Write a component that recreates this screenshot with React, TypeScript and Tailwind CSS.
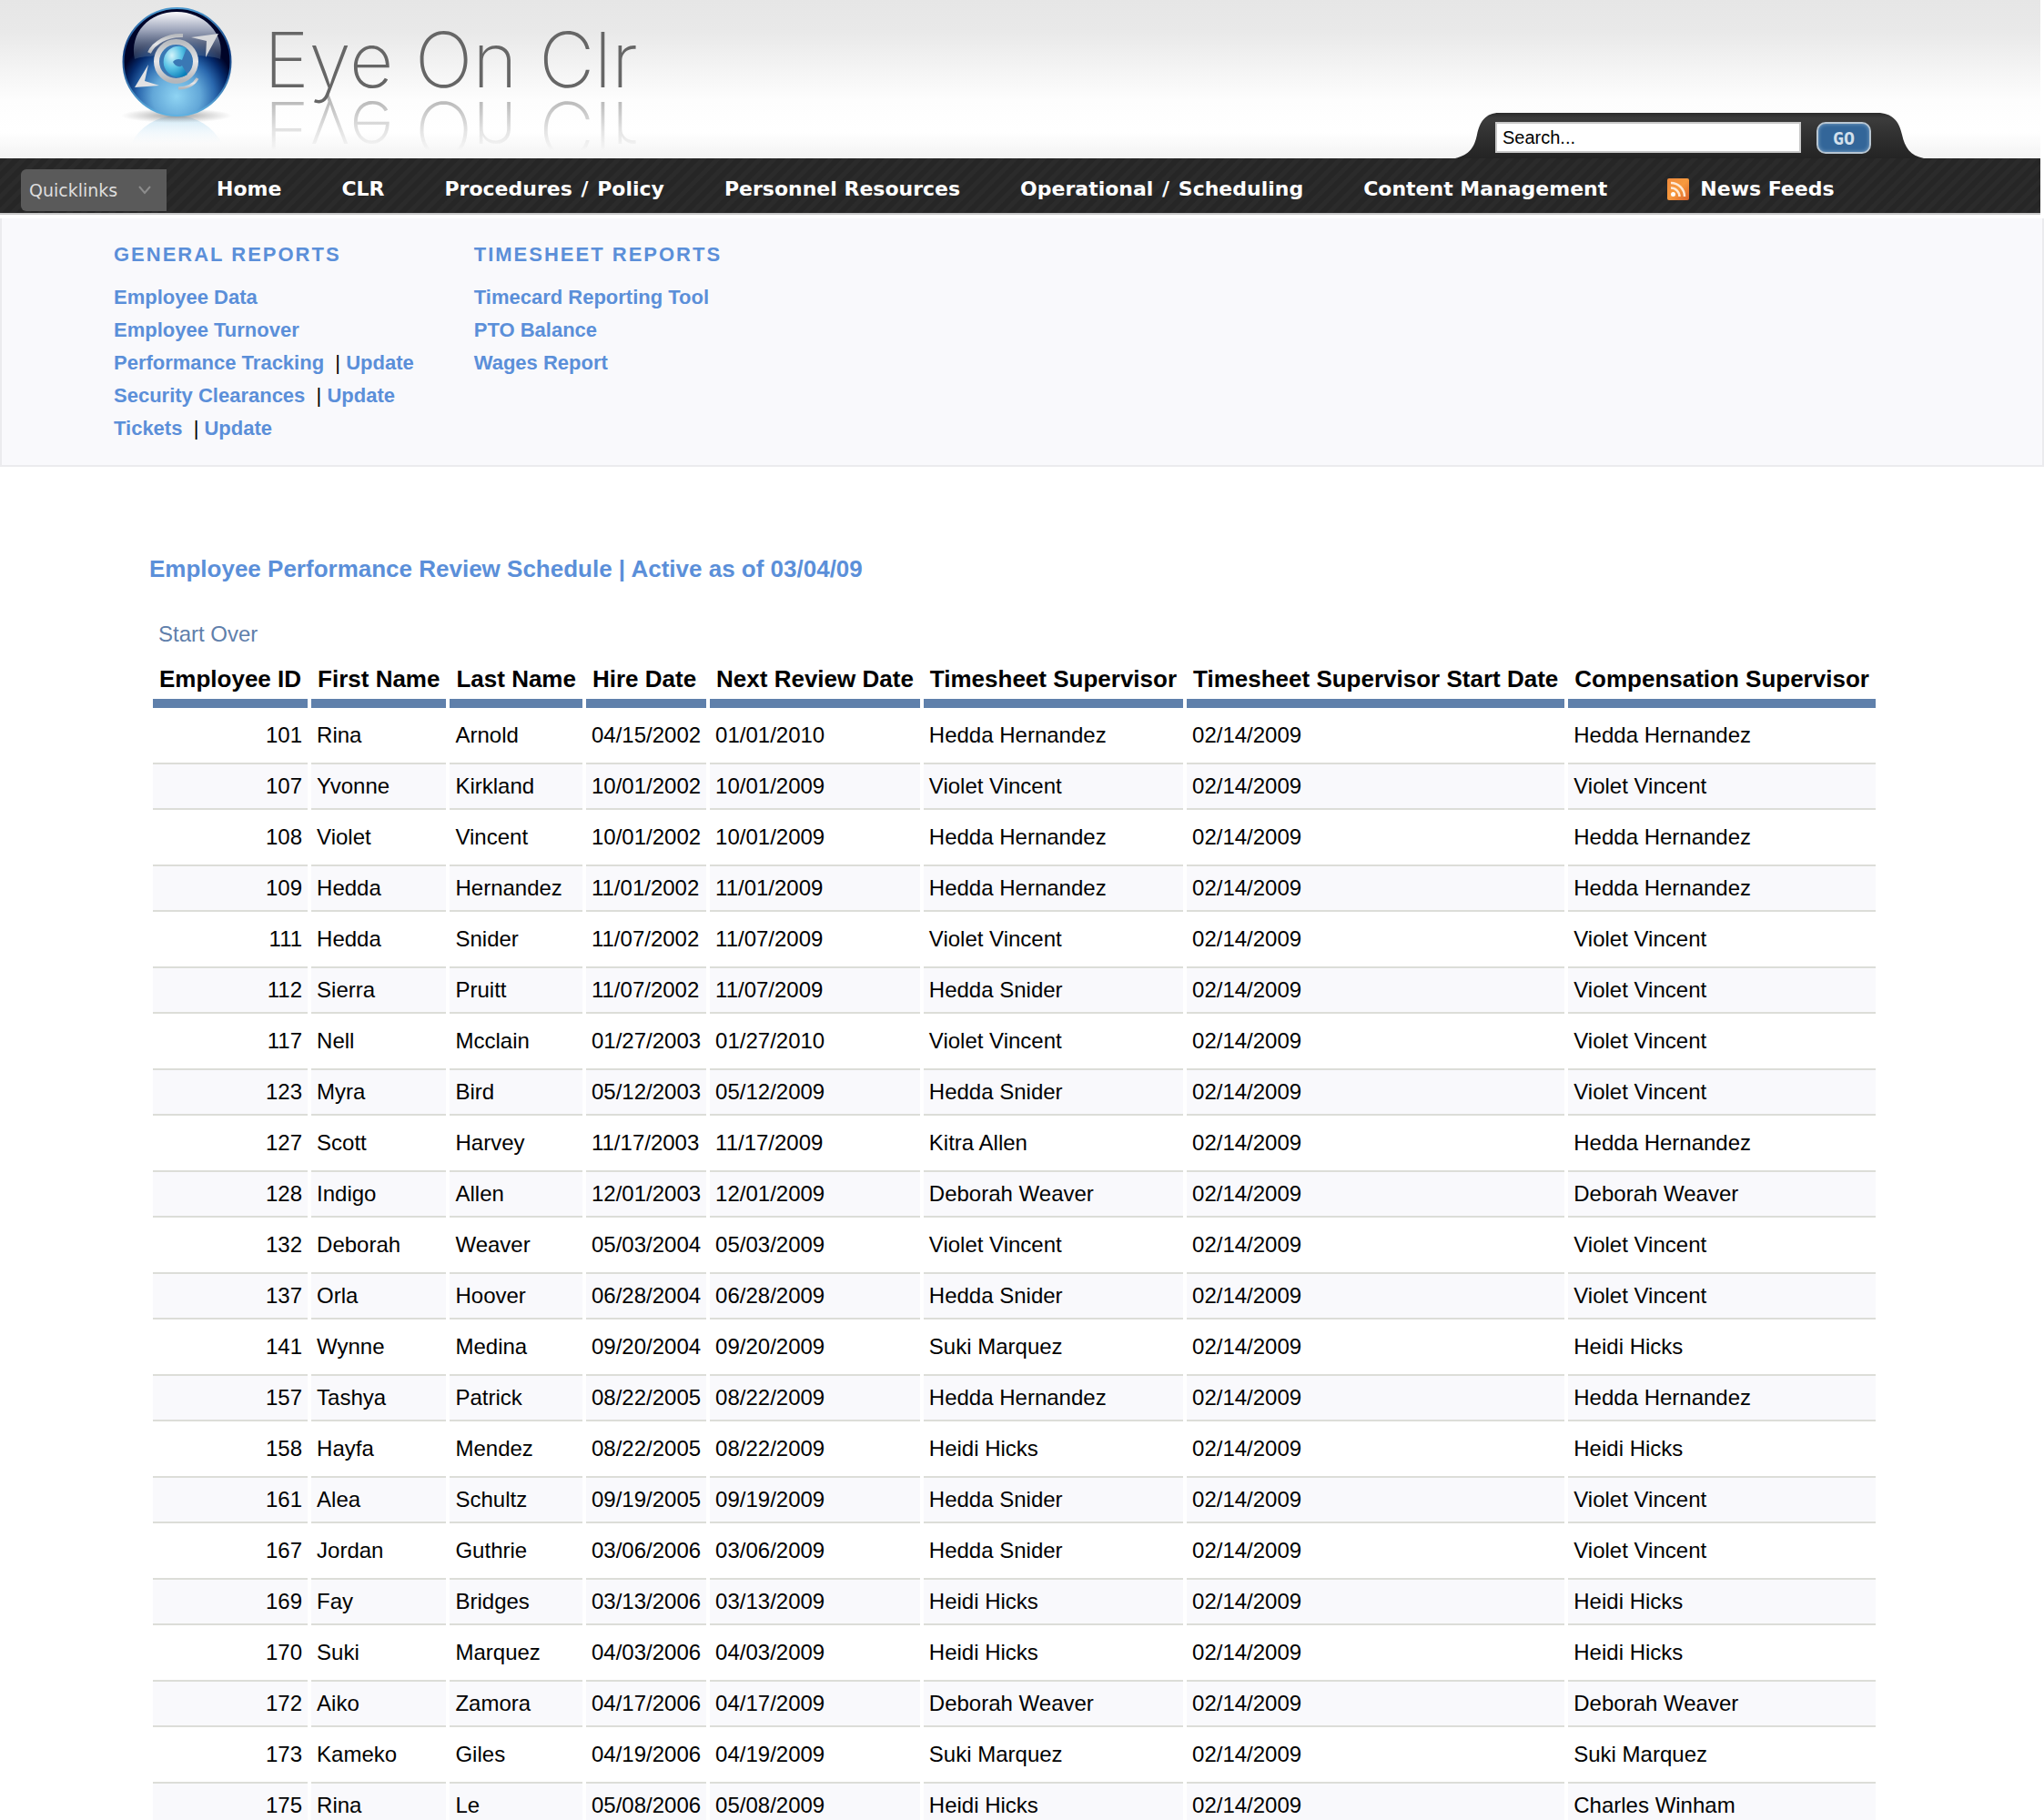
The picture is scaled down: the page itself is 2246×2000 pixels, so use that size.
import React from "react";

const NAV: string[][] = [
  ["Home"],
  ["CLR"],
  ["Procedures", "Policy"],
  ["Personnel Resources"],
  ["Operational", "Scheduling"],
  ["Content Management"],
];

const GENERAL: { label: string; update?: boolean }[] = [
  { label: "Employee Data" },
  { label: "Employee Turnover" },
  { label: "Performance Tracking", update: true },
  { label: "Security Clearances", update: true },
  { label: "Tickets", update: true },
];

const TIMESHEET = ["Timecard Reporting Tool", "PTO Balance", "Wages Report"];

const COLUMNS = [
  "Employee ID",
  "First Name",
  "Last Name",
  "Hire Date",
  "Next Review Date",
  "Timesheet Supervisor",
  "Timesheet Supervisor Start Date",
  "Compensation Supervisor",
];

const START = "02/14/2009";

const ROWS: string[][] = [
  ["101", "Rina", "Arnold", "04/15/2002", "01/01/2010", "Hedda Hernandez", START, "Hedda Hernandez"],
  ["107", "Yvonne", "Kirkland", "10/01/2002", "10/01/2009", "Violet Vincent", START, "Violet Vincent"],
  ["108", "Violet", "Vincent", "10/01/2002", "10/01/2009", "Hedda Hernandez", START, "Hedda Hernandez"],
  ["109", "Hedda", "Hernandez", "11/01/2002", "11/01/2009", "Hedda Hernandez", START, "Hedda Hernandez"],
  ["111", "Hedda", "Snider", "11/07/2002", "11/07/2009", "Violet Vincent", START, "Violet Vincent"],
  ["112", "Sierra", "Pruitt", "11/07/2002", "11/07/2009", "Hedda Snider", START, "Violet Vincent"],
  ["117", "Nell", "Mcclain", "01/27/2003", "01/27/2010", "Violet Vincent", START, "Violet Vincent"],
  ["123", "Myra", "Bird", "05/12/2003", "05/12/2009", "Hedda Snider", START, "Violet Vincent"],
  ["127", "Scott", "Harvey", "11/17/2003", "11/17/2009", "Kitra Allen", START, "Hedda Hernandez"],
  ["128", "Indigo", "Allen", "12/01/2003", "12/01/2009", "Deborah Weaver", START, "Deborah Weaver"],
  ["132", "Deborah", "Weaver", "05/03/2004", "05/03/2009", "Violet Vincent", START, "Violet Vincent"],
  ["137", "Orla", "Hoover", "06/28/2004", "06/28/2009", "Hedda Snider", START, "Violet Vincent"],
  ["141", "Wynne", "Medina", "09/20/2004", "09/20/2009", "Suki Marquez", START, "Heidi Hicks"],
  ["157", "Tashya", "Patrick", "08/22/2005", "08/22/2009", "Hedda Hernandez", START, "Hedda Hernandez"],
  ["158", "Hayfa", "Mendez", "08/22/2005", "08/22/2009", "Heidi Hicks", START, "Heidi Hicks"],
  ["161", "Alea", "Schultz", "09/19/2005", "09/19/2009", "Hedda Snider", START, "Violet Vincent"],
  ["167", "Jordan", "Guthrie", "03/06/2006", "03/06/2009", "Hedda Snider", START, "Violet Vincent"],
  ["169", "Fay", "Bridges", "03/13/2006", "03/13/2009", "Heidi Hicks", START, "Heidi Hicks"],
  ["170", "Suki", "Marquez", "04/03/2006", "04/03/2009", "Heidi Hicks", START, "Heidi Hicks"],
  ["172", "Aiko", "Zamora", "04/17/2006", "04/17/2009", "Deborah Weaver", START, "Deborah Weaver"],
  ["173", "Kameko", "Giles", "04/19/2006", "04/19/2009", "Suki Marquez", START, "Suki Marquez"],
  ["175", "Rina", "Le", "05/08/2006", "05/08/2009", "Heidi Hicks", START, "Charles Winham"],
];

function Orb() {
  return (
    <svg className="h-[174px] w-[124px] shrink-0" viewBox="132 0 124 174" aria-hidden="true">
      <defs>
        <radialGradient id="body" gradientUnits="userSpaceOnUse" cx="194" cy="106" r="66">
          <stop offset="0" stopColor="#8fd4f3" />
          <stop offset="0.4" stopColor="#62a7d8" />
          <stop offset="0.64" stopColor="#2a68ae" />
          <stop offset="0.84" stopColor="#052a6b" />
          <stop offset="1" stopColor="#000428" />
        </radialGradient>
        <linearGradient id="gloss" x1="0" y1="0" x2="0" y2="1">
          <stop offset="0" stopColor="#fbfbfe" />
          <stop offset="0.4" stopColor="#a3abc0" stopOpacity="0.95" />
          <stop offset="1" stopColor="#56708f" stopOpacity="0.35" />
        </linearGradient>
        <linearGradient id="rim" x1="0" y1="0" x2="0" y2="1">
          <stop offset="0" stopColor="#4d9ad0" />
          <stop offset="0.4" stopColor="#123d80" />
          <stop offset="1" stopColor="#5fb2e2" />
        </linearGradient>
        <linearGradient id="metal" x1="0" y1="0" x2="0" y2="1">
          <stop offset="0" stopColor="#b9bcc0" />
          <stop offset="0.5" stopColor="#e6e6e8" />
          <stop offset="1" stopColor="#b4b6ba" />
        </linearGradient>
        <radialGradient id="core" cx="0.35" cy="0.3" r="0.8">
          <stop offset="0" stopColor="#d3f4fb" />
          <stop offset="0.5" stopColor="#5cc4e6" />
          <stop offset="1" stopColor="#0a7fba" />
        </radialGradient>
        <radialGradient id="shadow">
          <stop offset="0" stopColor="#777" stopOpacity="0.75" />
          <stop offset="1" stopColor="#999" stopOpacity="0" />
        </radialGradient>
        <linearGradient id="mirror" x1="0" y1="0" x2="0" y2="1">
          <stop offset="0" stopColor="#bcdff2" stopOpacity="0.8" />
          <stop offset="1" stopColor="#e6f2fa" stopOpacity="0" />
        </linearGradient>
      </defs>
      <path d="M144 158a56 56 0 0 1 100 0z" fill="url(#mirror)" />
      <ellipse cx="194" cy="127" rx="61" ry="8" fill="url(#shadow)" />
      <circle cx="194.500" cy="68" r="59" fill="url(#body)" stroke="url(#rim)" strokeWidth="2" />
      <path d="M148 65C142 36 164 13 194 13s54 24 48 52c-10-6-84-6-94 0z" fill="url(#gloss)" />
      <g fill="none" stroke="url(#metal)">
        <circle cx="193.500" cy="67.500" r="21.500" strokeWidth="6" fill="#3a78b4" />
        <path d="M164 58c5-11 20-20 37-19" strokeWidth="4" />
        <path d="M196 97c9 0 17-4 21-11" strokeWidth="3" />
      </g>
      <path d="M210 41l30-4-14 26 1-18z" fill="#d7d8db" />
      <path d="M163 71l-15 25 27-2-16-5z" fill="#e2e2e4" />
      <path d="M205 53a17 17 0 1 0 1 29l-6-10c-3 3-8 0-10-4 2-3 7-4 10-2z" fill="url(#core)" />
    </svg>
  );
}

function RssIcon() {
  return (
    <svg className="size-6" viewBox="0 0 24 24" aria-hidden="true">
      <defs>
        <linearGradient id="rss" x1="0" y1="0" x2="1" y2="1">
          <stop offset="0" stopColor="#f08a3c" />
          <stop offset="0.5" stopColor="#f79a3e" />
          <stop offset="1" stopColor="#d9602a" />
        </linearGradient>
      </defs>
      <rect width="24" height="24" rx="2" fill="url(#rss)" />
      <circle cx="6.500" cy="17.500" r="2.500" fill="#fff" />
      <path d="M4 10.500a9.500 9.500 0 0 1 9.500 9.500M4 5a15 15 0 0 1 15 15" fill="none" stroke="#fde9d6" strokeWidth="2.500" />
    </svg>
  );
}

function SearchTab() {
  return (
    <form
      className="relative mr-32 flex h-[50px] items-start gap-[17px] self-end pt-[10px] pr-[58px] pl-11"
      onSubmit={(e) => e.preventDefault()}
    >
      <svg className="absolute inset-0 h-full w-full" viewBox="0 0 515 50" preserveAspectRatio="none" aria-hidden="true">
        <defs>
          <linearGradient id="tab" x1="0" y1="0" x2="0" y2="1">
            <stop offset="0" stopColor="#2b2b2b" />
            <stop offset="0.12" stopColor="#3c3c3c" />
            <stop offset="0.5" stopColor="#303030" />
            <stop offset="1" stopColor="#242424" />
          </linearGradient>
        </defs>
        <path d="M0 50C16 46 21 38 24 24C27 9 34 0 48 0H464C480 0 488 9 491 24C494 38 500 47 515 50Z" fill="url(#tab)" />
      </svg>
      <input
        aria-label="Search"
        defaultValue="Search..."
        className="relative h-[34px] w-[336px] border-2 border-[#c9c9c9] bg-white px-[6px] text-xl text-black"
      />
      <button
        type="submit"
        className="relative h-[35px] w-[60px] rounded-[10px] border-2 border-[#b8c6d2] bg-[#336699] pt-px font-['DejaVu_Sans_Mono',monospace] text-xl leading-5 font-bold text-[#d3e0ec] shadow-[inset_0_0_4px_#7fa6c8]"
      >
        GO
      </button>
    </form>
  );
}

const link = "text-[#5b8fd9] hover:underline";

export default function App() {
  return (
    <div className="min-h-screen bg-white font-['Liberation_Sans',Arial,sans-serif] text-black">
      <header className="mr-1 flex h-[174px] items-start justify-between bg-[linear-gradient(#e6e6e6_0px,#e9e9e9_35px,#fdfdfd_110px,#ffffff_145px,#f3f3f3_174px)]">
        <a href="#" className="flex items-start pl-[132px]">
          <Orb />
          <span className="mt-[27px] ml-[34px] block font-['Inter',sans-serif] text-[84px] leading-[77px] font-extralight whitespace-nowrap text-[#666] [-webkit-box-reflect:below_0px_linear-gradient(transparent_20%,rgba(0,0,0,0.5)_100%)]">
            Eye On Clr
          </span>
        </a>
        <SearchTab />
      </header>

      <nav className="mr-1 flex h-[62px] items-start border-b-2 border-[#c9c9c9] bg-[repeating-linear-gradient(135deg,#262626_0px,#262626_5px,#2b2b2b_6px,#2b2b2b_10px,#262626_11px)] pt-3 font-['DejaVu_Sans',sans-serif]">
        <button
          type="button"
          className="ml-[23px] flex h-[46px] w-40 items-center justify-between rounded-l-md bg-[#5a5a5a] pr-4 pl-[9px] text-[19px] text-[#dedede]"
        >
          Quicklinks
          <svg className="size-4" viewBox="0 0 16 16" fill="none" stroke="#8c8c8c" strokeWidth="2" aria-hidden="true">
            <path d="M2 4l6 7 6-7" />
          </svg>
        </button>
        <ul className="mt-2 ml-[55px] flex items-center gap-[66px] text-[22px] leading-7 font-bold whitespace-nowrap text-white">
          {NAV.map(([first, second]) => (
            <li key={first}>
              <a href="#">
                {first}
                {second && (
                  <>
                    {" "}
                    <span className="mx-0.5">/</span> {second}
                  </>
                )}
              </a>
            </li>
          ))}
          <li>
            <a href="#" className="flex items-center gap-3">
              <RssIcon />
              News Feeds
            </a>
          </li>
        </ul>
      </nav>

      <section className="mt-1 flex gap-[66px] border-x-2 border-b-2 border-[#ebebee] bg-[#f9f9fc] pt-6 pb-[22px] pl-[123px] text-[22px] leading-9 font-bold">
        <div>
          <h2 className="mb-[13px] leading-8 tracking-[2px] text-[#5b8fd9] uppercase">General Reports</h2>
          <ul>
            {GENERAL.map((g) => (
              <li key={g.label}>
                <a href="#" className={link}>{g.label}</a>
                {g.update && (
                  <>
                    <span className="font-normal whitespace-pre">{"  | "}</span>
                    <a href="#" className={link}>Update</a>
                  </>
                )}
              </li>
            ))}
          </ul>
        </div>
        <div>
          <h2 className="mb-[13px] leading-8 tracking-[2px] text-[#5b8fd9] uppercase">Timesheet Reports</h2>
          <ul>
            {TIMESHEET.map((t) => (
              <li key={t}>
                <a href="#" className={link}>{t}</a>
              </li>
            ))}
          </ul>
        </div>
      </section>

      <main className="px-[164px] pt-24">
        <h1 className="text-[26px] leading-8 font-bold text-[#5b8fd9]">
          Employee Performance Review Schedule | Active as of 03/04/09
        </h1>
        <a href="#" className="mt-10 ml-[10px] inline-block text-2xl leading-8 text-[#5f7fab]">
          Start Over
        </a>
        <table className="mt-[3px] border-separate border-spacing-1 text-2xl leading-7 whitespace-nowrap">
          <thead>
            <tr>
              {COLUMNS.map((c) => (
                <th key={c} scope="col" className="border-b-[10px] border-[#5f80ab] px-[7px] pt-3 pb-2 text-left text-[26px] leading-7 font-bold">
                  {c}
                </th>
              ))}
            </tr>
          </thead>
          <tbody>
            {ROWS.map((r) => (
              <tr key={r[0]} className="group">
                {r.map((c, i) => (
                  <td
                    key={i}
                    className="border-y-2 border-transparent px-[6px] py-[10px] first:text-right group-even:border-[#dcddd8] group-even:bg-[#f9f9fc]"
                  >
                    {c}
                  </td>
                ))}
              </tr>
            ))}
          </tbody>
        </table>
      </main>
    </div>
  );
}
